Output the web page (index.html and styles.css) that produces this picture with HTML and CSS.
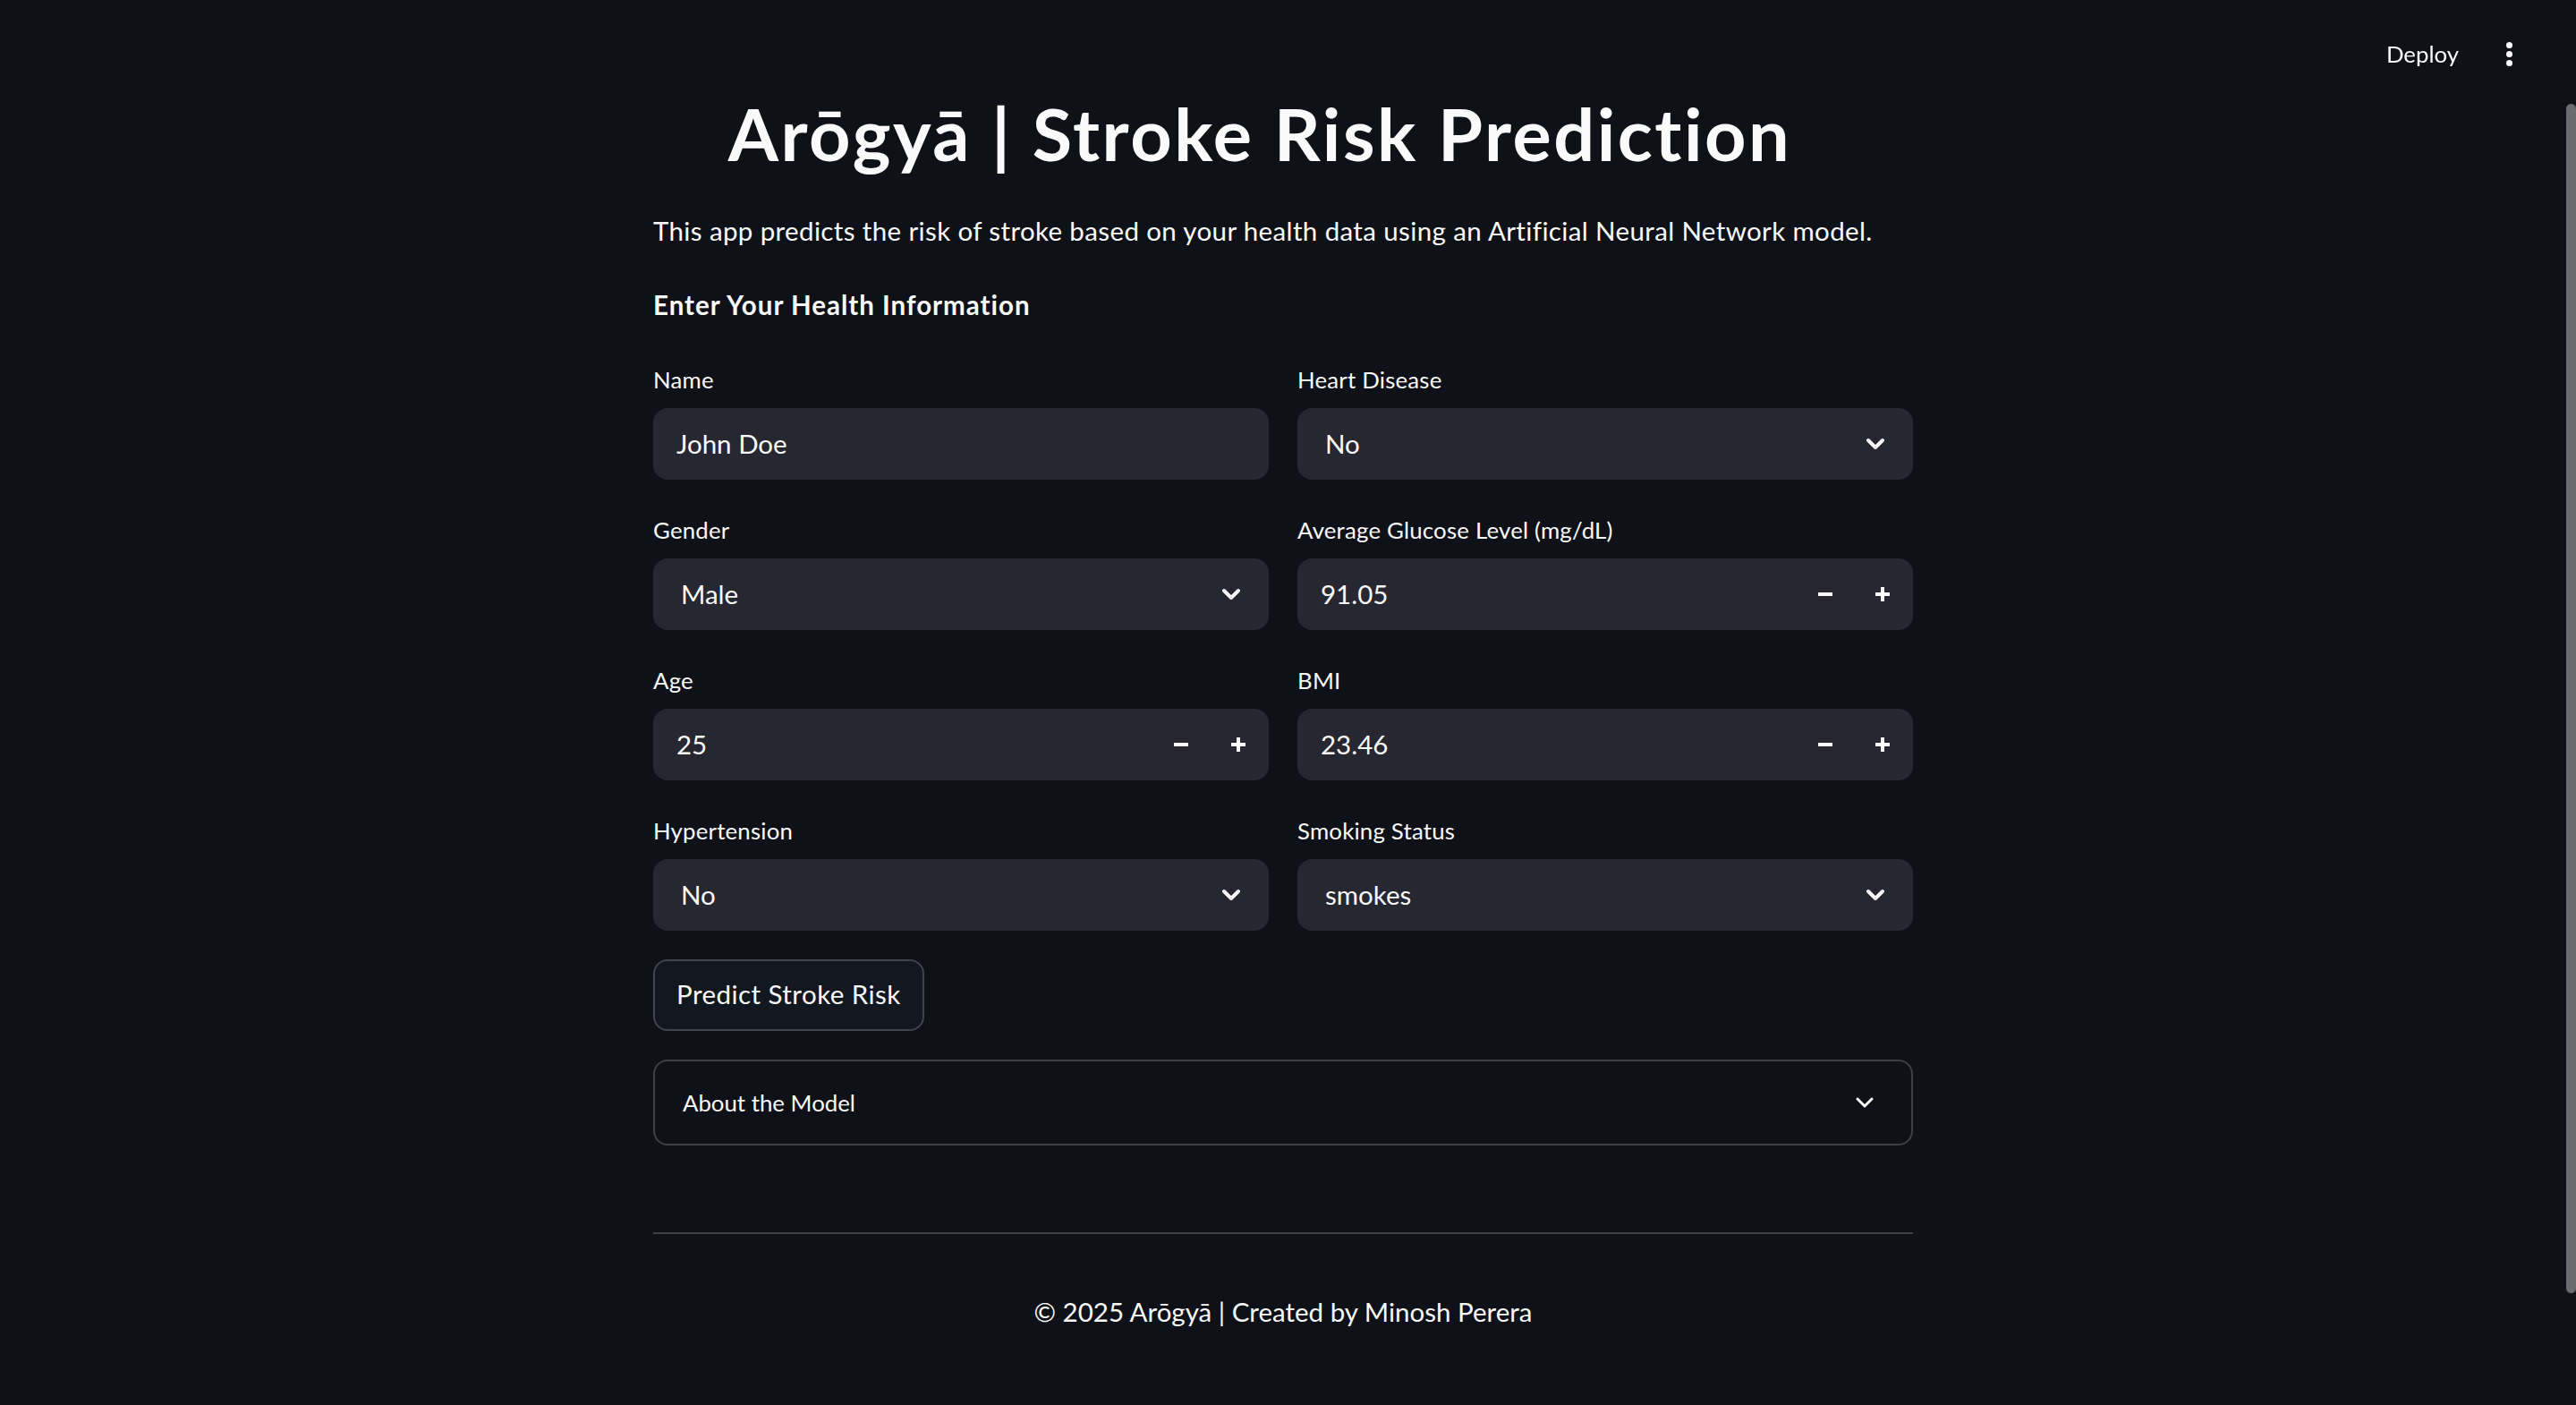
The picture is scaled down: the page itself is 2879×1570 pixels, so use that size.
FILE: index.html
```html
<!DOCTYPE html>
<html lang="en">
<head>
<meta charset="utf-8">
<title>Arōgyā | Stroke Risk Prediction</title>
<link rel="stylesheet" href="styles.css">
</head>
<body>
<header class="topbar">
  <span class="deploy">Deploy</span>
  <span class="kebab"><i></i><i></i><i></i></span>
</header>
<div class="scroll-thumb"></div>
<div class="app">
  <main class="block">
    <h1 class="title">Arōgyā | Stroke Risk Prediction</h1>
    <p class="intro">This app predicts the risk of stroke based on your health data using an Artificial Neural Network model.</p>
    <p class="section">Enter Your Health Information</p>
    <div class="columns">
      <div class="col">
        <div class="field">
          <div class="label">Name</div>
          <div class="input text">John Doe</div>
        </div>
        <div class="field">
          <div class="label">Gender</div>
          <div class="input select"><span>Male</span><svg class="chev" width="22" height="14" viewBox="0 0 22 14"><polyline points="3,3 11,11 19,3" fill="none" stroke="#fafafa" stroke-width="4" stroke-linecap="round" stroke-linejoin="round"/></svg></div>
        </div>
        <div class="field">
          <div class="label">Age</div>
          <div class="input number"><span class="value">25</span><span class="step"><svg width="16" height="16" viewBox="0 0 16 16"><rect x="0" y="6" width="16" height="4" fill="#fafafa"/></svg></span><span class="step"><svg width="16" height="16" viewBox="0 0 16 16"><rect x="0" y="6" width="16" height="4" fill="#fafafa"/><rect x="6" y="0" width="4" height="16" fill="#fafafa"/></svg></span></div>
        </div>
        <div class="field">
          <div class="label">Hypertension</div>
          <div class="input select"><span>No</span><svg class="chev" width="22" height="14" viewBox="0 0 22 14"><polyline points="3,3 11,11 19,3" fill="none" stroke="#fafafa" stroke-width="4" stroke-linecap="round" stroke-linejoin="round"/></svg></div>
        </div>
      </div>
      <div class="col">
        <div class="field">
          <div class="label">Heart Disease</div>
          <div class="input select"><span>No</span><svg class="chev" width="22" height="14" viewBox="0 0 22 14"><polyline points="3,3 11,11 19,3" fill="none" stroke="#fafafa" stroke-width="4" stroke-linecap="round" stroke-linejoin="round"/></svg></div>
        </div>
        <div class="field">
          <div class="label">Average Glucose Level (mg/dL)</div>
          <div class="input number"><span class="value">91.05</span><span class="step"><svg width="16" height="16" viewBox="0 0 16 16"><rect x="0" y="6" width="16" height="4" fill="#fafafa"/></svg></span><span class="step"><svg width="16" height="16" viewBox="0 0 16 16"><rect x="0" y="6" width="16" height="4" fill="#fafafa"/><rect x="6" y="0" width="4" height="16" fill="#fafafa"/></svg></span></div>
        </div>
        <div class="field">
          <div class="label">BMI</div>
          <div class="input number"><span class="value">23.46</span><span class="step"><svg width="16" height="16" viewBox="0 0 16 16"><rect x="0" y="6" width="16" height="4" fill="#fafafa"/></svg></span><span class="step"><svg width="16" height="16" viewBox="0 0 16 16"><rect x="0" y="6" width="16" height="4" fill="#fafafa"/><rect x="6" y="0" width="4" height="16" fill="#fafafa"/></svg></span></div>
        </div>
        <div class="field">
          <div class="label">Smoking Status</div>
          <div class="input select"><span>smokes</span><svg class="chev" width="22" height="14" viewBox="0 0 22 14"><polyline points="3,3 11,11 19,3" fill="none" stroke="#fafafa" stroke-width="4" stroke-linecap="round" stroke-linejoin="round"/></svg></div>
        </div>
      </div>
    </div>
    <button class="btn" type="button">Predict Stroke Risk</button>
    <div class="expander">
      <span>About the Model</span>
      <svg width="22" height="14" viewBox="0 0 22 14"><polyline points="3,3 11,11 19,3" fill="none" stroke="#fafafa" stroke-width="3" stroke-linecap="round" stroke-linejoin="round"/></svg>
    </div>
    <hr class="rule">
    <p class="footer">© 2025 Arōgyā | Created by Minosh Perera</p>
  </main>
</div>
</body>
</html>
```
FILE: styles.css
```css
html, body {
  margin: 0;
  background: #0e1117;
  color: #fafafa;
  font-family: Lato, "Noto Sans", sans-serif;
}

.topbar {
  position: fixed;
  top: 0;
  left: 0;
  right: 0;
  height: 120px;
  display: flex;
  align-items: center;
  justify-content: flex-end;
  gap: 36px;
  padding-right: 55px;
  box-sizing: border-box;
}

.deploy {
  font-size: 25.8px;
  line-height: 40px;
}

.kebab {
  width: 40px;
  display: flex;
  flex-direction: column;
  align-items: center;
  gap: 3px;
}

.kebab i {
  width: 7px;
  height: 7px;
  border-radius: 50%;
  background: #fafafa;
}

.scroll-thumb {
  position: fixed;
  top: 116px;
  right: 0;
  width: 11px;
  height: 1329px;
  background: #6a6b6f;
  border-radius: 6px;
}

.app {
  padding-right: 11px;
}

.block {
  width: 1408px;
  margin: 0 auto;
  padding: 100px 0 60px;
}

.title {
  margin: 0;
  padding-right: 52px;
  text-align: center;
  font-size: 81px;
  line-height: 97px;
  font-weight: 700;
  letter-spacing: 2.5px;
}

.intro {
  margin: 37px 0 0;
  font-size: 29.5px;
  line-height: 48px;
  letter-spacing: 0.37px;
}

.section {
  margin: 35px 0 0;
  font-size: 29.5px;
  line-height: 48px;
  font-weight: 700;
  letter-spacing: 1px;
}

.columns {
  display: flex;
  gap: 32px;
  margin-top: 35px;
}

.col {
  flex: 1;
  min-width: 0;
  display: flex;
  flex-direction: column;
  gap: 32px;
}

.label {
  height: 48px;
  margin-bottom: 8px;
  font-size: 25.8px;
  line-height: 48px;
  letter-spacing: 0.2px;
}

.input {
  height: 80px;
  box-sizing: border-box;
  background: #262730;
  border-radius: 16px;
  display: flex;
  align-items: center;
  font-size: 29.5px;
  padding-bottom: 2px;
}

.input.text {
  padding-left: 26px;
  padding-right: 26px;
}

.input.select {
  padding-left: 31px;
  padding-right: 31px;
  justify-content: space-between;
}

.input.select .chev {
  margin-top: 2px;
}

.input.number {
  padding-left: 26px;
  padding-right: 2px;
}

.number .value {
  flex: 1;
}

.step {
  width: 64px;
  height: 76px;
  margin-top: 2px;
  display: flex;
  align-items: center;
  justify-content: center;
}

.btn {
  display: block;
  margin-top: 32px;
  height: 80px;
  padding: 0 24px 3px;
  box-sizing: border-box;
  background: #131720;
  color: #fafafa;
  border: 2px solid rgba(250, 250, 250, 0.2);
  border-radius: 16px;
  font-family: inherit;
  font-size: 29.5px;
  letter-spacing: 0.45px;
}

.expander {
  margin-top: 32px;
  height: 96px;
  box-sizing: border-box;
  border: 2px solid rgba(250, 250, 250, 0.2);
  border-radius: 16px;
  padding: 0 41px 0 31px;
  display: flex;
  align-items: center;
  justify-content: space-between;
  font-size: 25.8px;
}

.rule {
  margin: 97px 0 0;
  border: 0;
  height: 2px;
  background: rgba(250, 250, 250, 0.2);
}

.footer {
  margin: 63px 0 0;
  text-align: center;
  font-size: 29.5px;
  line-height: 48px;
}
```
